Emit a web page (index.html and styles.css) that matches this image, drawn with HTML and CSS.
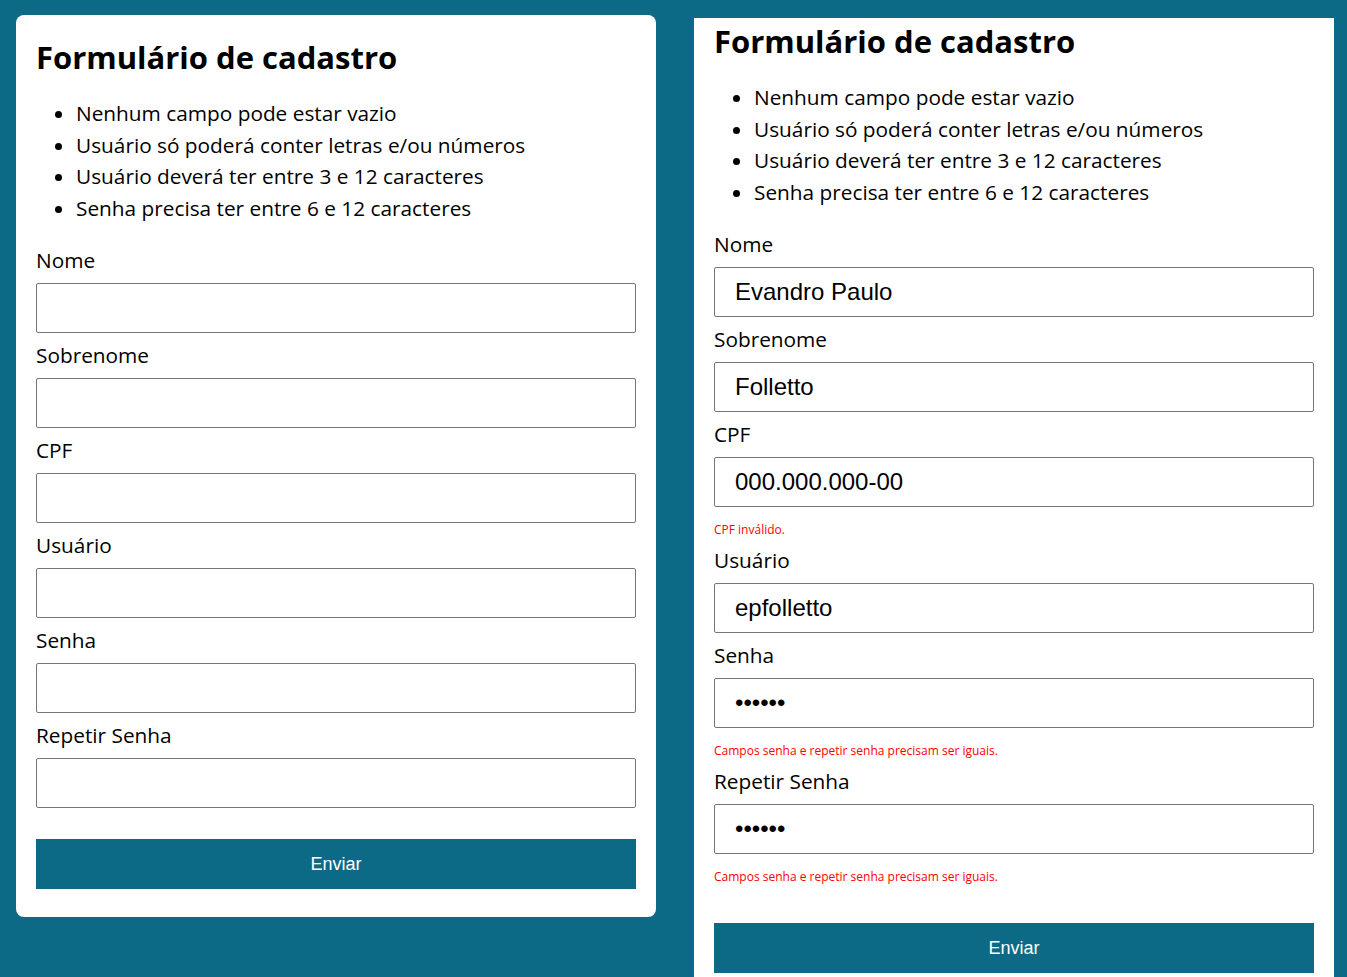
FILE: index.html
```html
<!DOCTYPE html>
<html lang="pt-BR">
<head>
<meta charset="utf-8">
<title>Formulário de cadastro</title>
<link rel="stylesheet" href="styles.css">
</head>
<body>
<div class="page">
  <div class="card">
    <h1 class="title">Formulário de cadastro</h1>
    <ul class="rules">
      <li>Nenhum campo pode estar vazio</li>
      <li>Usuário só poderá conter letras e/ou números</li>
      <li>Usuário deverá ter entre 3 e 12 caracteres</li>
      <li>Senha precisa ter entre 6 e 12 caracteres</li>
    </ul>
    <form class="form">
      <label class="label">Nome</label>
      <input class="input" type="text">
      <label class="label">Sobrenome</label>
      <input class="input" type="text">
      <label class="label">CPF</label>
      <input class="input" type="text">
      <label class="label">Usuário</label>
      <input class="input" type="text">
      <label class="label">Senha</label>
      <input class="input" type="password">
      <label class="label">Repetir Senha</label>
      <input class="input" type="password">
      <button class="button" type="button">Enviar</button>
    </form>
  </div>
  <div class="card card--filled">
    <h1 class="title">Formulário de cadastro</h1>
    <ul class="rules">
      <li>Nenhum campo pode estar vazio</li>
      <li>Usuário só poderá conter letras e/ou números</li>
      <li>Usuário deverá ter entre 3 e 12 caracteres</li>
      <li>Senha precisa ter entre 6 e 12 caracteres</li>
    </ul>
    <form class="form">
      <label class="label">Nome</label>
      <input class="input" type="text" value="Evandro Paulo">
      <label class="label">Sobrenome</label>
      <input class="input" type="text" value="Folletto">
      <label class="label">CPF</label>
      <input class="input" type="text" value="000.000.000-00">
      <div class="error">CPF inválido.</div>
      <label class="label">Usuário</label>
      <input class="input" type="text" value="epfolletto">
      <label class="label">Senha</label>
      <input class="input" type="password" value="123456">
      <div class="error">Campos senha e repetir senha precisam ser iguais.</div>
      <label class="label">Repetir Senha</label>
      <input class="input" type="password" value="123456">
      <div class="error error--last">Campos senha e repetir senha precisam ser iguais.</div>
      <button class="button" type="button">Enviar</button>
    </form>
  </div>
</div>
</body>
</html>
```
FILE: styles.css
```css
html, body {
  margin: 0;
  padding: 0;
}
body {
  background: #0c6a86;
  font-family: "Open Sans", "Liberation Sans", sans-serif;
  color: #000;
  overflow: hidden;
  height: 977px;
}
.page {
  display: flex;
  align-items: flex-start;
  gap: 38px;
  padding: 15px 0 15px 16px;
}
.card {
  flex: 0 0 640px;
  width: 640px;
  box-sizing: border-box;
  background: #fff;
  border-radius: 8px;
  padding: 23px 20px 28px;
}
.card--filled {
  margin-top: 3px;
  border-radius: 0;
  padding-top: 4px;
}
.title {
  margin: 0;
  font-size: 31px;
  line-height: 38.4px;
  font-weight: 700;
}
.rules {
  margin: 22px 0 14px;
  padding-left: 40px;
  font-size: 20.8px;
  line-height: 31.5px;
}
.form {
  display: flex;
  flex-direction: column;
}
.label {
  display: block;
  font-size: 20.8px;
  line-height: 30px;
  margin: 7px 0 8px;
}
.input {
  display: block;
  box-sizing: border-box;
  width: 100%;
  height: 50px;
  margin: 0;
  padding: 0 20px;
  border: 1px solid #767676;
  border-radius: 2px;
  font-family: "Liberation Sans", Arial, sans-serif;
  font-size: 24px;
  color: #000;
  background: #fff;
  outline: none;
}
.error {
  margin-top: 14px;
  font-size: 12px;
  line-height: 17px;
  color: #f00;
}
.error--last {
  margin-bottom: 7px;
}
.button {
  display: block;
  width: 100%;
  height: 50px;
  margin-top: 31px;
  border: none;
  border-radius: 0;
  background: #0c6a86;
  color: #fff;
  font-family: "Liberation Sans", Arial, sans-serif;
  font-size: 18px;
  cursor: pointer;
}
```
